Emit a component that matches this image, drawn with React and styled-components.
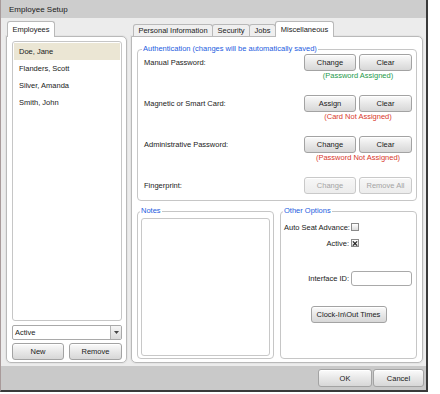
import React from "react";
import styled, { createGlobalStyle } from "styled-components";

const GlobalStyle = createGlobalStyle`
  html, body {
    margin: 0;
    padding: 0;
    background: #ffffff;
  }
  body {
    font-family: "Liberation Sans", Arial, sans-serif;
    font-size: 7.5px;
    color: #1a1a1a;
  }
  * {
    box-sizing: border-box;
  }
`;

const employees = ["Doe, Jane", "Flanders, Scott", "Silver, Amanda", "Smith, John"];

const authRows = [
  { label: "Manual Password:", left: "Change", right: "Clear", status: "(Password Assigned)", ok: true },
  { label: "Magnetic or Smart Card:", left: "Assign", right: "Clear", status: "(Card Not Assigned)" },
  { label: "Administrative Password:", left: "Change", right: "Clear", status: "(Password Not Assigned)" },
];

const CheckBox = ({ checked }) => (
  <Check>
    {checked && (
      <svg width="7" height="7" viewBox="0 0 7 7">
        <path d="M1 1 L6 6 M6 1 L1 6" stroke="#222" strokeWidth="1.4" />
      </svg>
    )}
  </Check>
);

const App = () => {
  return (
    <>
      <GlobalStyle />
      <Window>
        <TitleBar>Employee Setup</TitleBar>
        <Body>
          <LeftColumn>
            <TabRow>
              <Tab $active $w={48}>Employees</Tab>
            </TabRow>
            <LeftPanel>
              <List>
                {employees.map((name, i) => (
                  <ListItem key={name} $selected={i === 0}>
                    {name}
                  </ListItem>
                ))}
              </List>
              <Select>
                <SelectValue>Active</SelectValue>
                <SelectArrow>
                  <svg width="5" height="3" viewBox="0 0 5 3">
                    <path d="M0 0 L5 0 L2.5 3 Z" fill="#444" />
                  </svg>
                </SelectArrow>
              </Select>
              <ButtonRow>
                <Button $w={52}>New</Button>
                <Button $w={53}>Remove</Button>
              </ButtonRow>
            </LeftPanel>
          </LeftColumn>

          <RightColumn>
            <TabRow $indent>
              <Tab $w={80}>Personal Information</Tab>
              <Tab $w={38}>Security</Tab>
              <Tab $w={27}>Jobs</Tab>
              <Tab $active $w={59}>Miscellaneous</Tab>
            </TabRow>
            <RightPanel>
              <Group>
                <Legend>Authentication (changes will be automatically saved)</Legend>
                {authRows.map((row) => (
                  <AuthRow key={row.label}>
                    <AuthLabel>{row.label}</AuthLabel>
                    <Controls>
                      <ButtonPair>
                        <Button $w={52}>{row.left}</Button>
                        <Button $w={53}>{row.right}</Button>
                      </ButtonPair>
                      <Status $ok={row.ok}>{row.status}</Status>
                    </Controls>
                  </AuthRow>
                ))}
                <AuthRow $last>
                  <AuthLabel>Fingerprint:</AuthLabel>
                  <Controls>
                    <ButtonPair>
                      <Button $w={52} disabled>
                        Change
                      </Button>
                      <Button $w={53} disabled>
                        Remove All
                      </Button>
                    </ButtonPair>
                  </Controls>
                </AuthRow>
              </Group>

              <Lower>
                <Group $fill $pad="0 3px 2px 3px">
                  <Legend>Notes</Legend>
                  <NoteArea />
                </Group>
                <Group $fill $pad="0 3px 3px 3px">
                  <Legend>Other Options</Legend>
                  <OptRow $mt={5}>
                    <OptLabel>Auto Seat Advance:</OptLabel>
                    <CheckBox />
                  </OptRow>
                  <OptRow $mt={4}>
                    <OptLabel>Active:</OptLabel>
                    <CheckBox checked />
                  </OptRow>
                  <OptRow $mt={22}>
                    <OptLabel>Interface ID:</OptLabel>
                    <TextInput />
                  </OptRow>
                  <CenterRow>
                    <Button $w={76}>Clock-In\Out Times</Button>
                  </CenterRow>
                </Group>
              </Lower>
            </RightPanel>
          </RightColumn>
        </Body>
        <Footer>
          <Button $w={54} $h={18}>
            OK
          </Button>
          <Button $w={51} $h={18}>
            Cancel
          </Button>
        </Footer>
      </Window>
    </>
  );
};

export default App;

const Window = styled.div`
  width: 428px;
  height: 392px;
  display: flex;
  flex-direction: column;
  border-left: 1px solid #a89a9a;
  border-right: 2px solid #3a3a3a;
  border-bottom: 2px solid #3a3a3a;
  background: #ececec;
`;

const TitleBar = styled.div`
  height: 18px;
  flex: none;
  display: flex;
  align-items: center;
  padding-left: 8px;
  background: #cdcdcd;
  font-size: 8px;
`;

const Body = styled.div`
  flex: 1;
  display: flex;
  gap: 4px;
  padding: 3px 3px 3px 5px;
  background: #ececec;
  min-height: 0;
`;

const LeftColumn = styled.div`
  width: 121px;
  display: flex;
  flex-direction: column;
`;

const RightColumn = styled.div`
  flex: 1;
  display: flex;
  flex-direction: column;
`;

const TabRow = styled.div`
  height: 15px;
  flex: none;
  display: flex;
  align-items: flex-end;
  padding-left: ${(p) => (p.$indent ? "2px" : "1px")};
`;

const Tab = styled.div`
  position: relative;
  z-index: 1;
  width: ${(p) => p.$w}px;
  height: ${(p) => (p.$active ? "16px" : "12px")};
  margin-bottom: ${(p) => (p.$active ? "-1px" : "0")};
  margin-right: -1px;
  display: flex;
  align-items: center;
  justify-content: center;
  padding-bottom: ${(p) => (p.$active ? "1px" : "0")};
  background: ${(p) => (p.$active ? "#ffffff" : "#efefef")};
  border: 1px solid #b9b9b9;
  border-bottom: none;
  border-radius: 3px 3px 0 0;
  white-space: nowrap;
`;

const Panel = styled.div`
  flex: 1;
  min-height: 0;
  display: flex;
  flex-direction: column;
  background: #ffffff;
  border: 1px solid #b9b9b9;
  border-radius: 0 5px 5px 5px;
  box-shadow: 0 0 0 1px #e4e4e4;
`;

const LeftPanel = styled(Panel)`
  padding: 4px 4px 2px 5px;
`;

const RightPanel = styled(Panel)`
  padding: 7px 5px 3px 5px;
`;

const List = styled.div`
  flex: 1;
  border: 1px solid #c6c6c6;
  border-radius: 3px;
  padding: 1px;
  background: #ffffff;
`;

const ListItem = styled.div`
  height: 17px;
  line-height: 17px;
  padding-left: 5px;
  background: ${(p) => (p.$selected ? "#ebe6d4" : "transparent")};
`;

const Select = styled.div`
  margin-top: 4px;
  height: 15px;
  display: flex;
  border: 1px solid #a9a9a9;
  border-radius: 2px;
  background: #ffffff;
  overflow: hidden;
`;

const SelectValue = styled.div`
  flex: 1;
  display: flex;
  align-items: center;
  padding-left: 2px;
`;

const SelectArrow = styled.div`
  width: 11px;
  display: flex;
  align-items: center;
  justify-content: center;
  border-left: 1px solid #b4b4b4;
  background: linear-gradient(#f6f6f6, #dadada);
`;

const ButtonRow = styled.div`
  margin-top: 3px;
  display: flex;
  justify-content: space-between;
`;

const Button = styled.button`
  width: ${(p) => p.$w}px;
  height: ${(p) => p.$h || 17}px;
  padding: 0;
  font-family: inherit;
  font-size: 7.5px;
  color: ${(p) => (p.disabled ? "#a4a4a4" : "#1a1a1a")};
  background: ${(p) =>
    p.disabled
      ? "linear-gradient(#f7f7f7, #ececec)"
      : "linear-gradient(#fbfbfb, #e8e8e8 50%, #d7d7d7)"};
  border: 1px solid ${(p) => (p.disabled ? "#c9c9c9" : "#a3a3a3")};
  border-radius: 3px;
  box-shadow: inset 0 1px 0 #ffffff;
  white-space: nowrap;
`;

const Group = styled.fieldset`
  margin: 0;
  min-width: 0;
  padding: ${(p) => p.$pad || "0 4px 6px 5px"};
  border: 1px solid #c6c6c6;
  border-radius: 4px;
  display: flex;
  flex-direction: column;
  flex: ${(p) => (p.$fill ? 1 : "none")};
`;

const Legend = styled.legend`
  padding: 0 1px;
  margin-left: -1px;
  line-height: 10px;
  font-size: 7.5px;
  color: #1d5ce0;
`;

const AuthRow = styled.div`
  height: ${(p) => (p.$last ? "17px" : "41px")};
  display: flex;
  justify-content: space-between;
  align-items: flex-start;
`;

const AuthLabel = styled.div`
  line-height: 17px;
  padding-left: 1px;
`;

const Controls = styled.div`
  display: flex;
  flex-direction: column;
  align-items: center;
`;

const ButtonPair = styled.div`
  display: flex;
  gap: 3px;
`;

const Status = styled.div`
  line-height: 10px;
  color: ${(p) => (p.$ok ? "#1c9a4a" : "#d8372b")};
`;

const Lower = styled.div`
  flex: 1;
  min-height: 0;
  display: flex;
  gap: 6px;
  margin-top: 5px;
`;

const NoteArea = styled.div`
  flex: 1;
  margin-top: 2px;
  border: 1px solid #c8c8c8;
  border-radius: 3px;
  background: #ffffff;
`;

const OptRow = styled.div`
  margin-top: ${(p) => p.$mt}px;
  display: grid;
  grid-template-columns: 65px 1fr;
  column-gap: 2px;
  align-items: center;
  min-height: 12px;
`;

const OptLabel = styled.div`
  text-align: right;
  white-space: nowrap;
`;

const Check = styled.div`
  width: 8px;
  height: 8px;
  display: flex;
  align-items: center;
  justify-content: center;
  border: 1px solid #8a8a8a;
  background: linear-gradient(#ffffff, #dcdcdc);
`;

const TextInput = styled.div`
  width: 61px;
  height: 15px;
  border: 1px solid #a9a9a9;
  border-radius: 3px;
  background: #ffffff;
`;

const CenterRow = styled.div`
  margin-top: 20px;
  display: flex;
  justify-content: center;
`;

const Footer = styled.div`
  height: 24px;
  flex: none;
  display: flex;
  align-items: center;
  justify-content: flex-end;
  gap: 1px;
  padding-right: 2px;
  background: #c9c9c9;
`;
